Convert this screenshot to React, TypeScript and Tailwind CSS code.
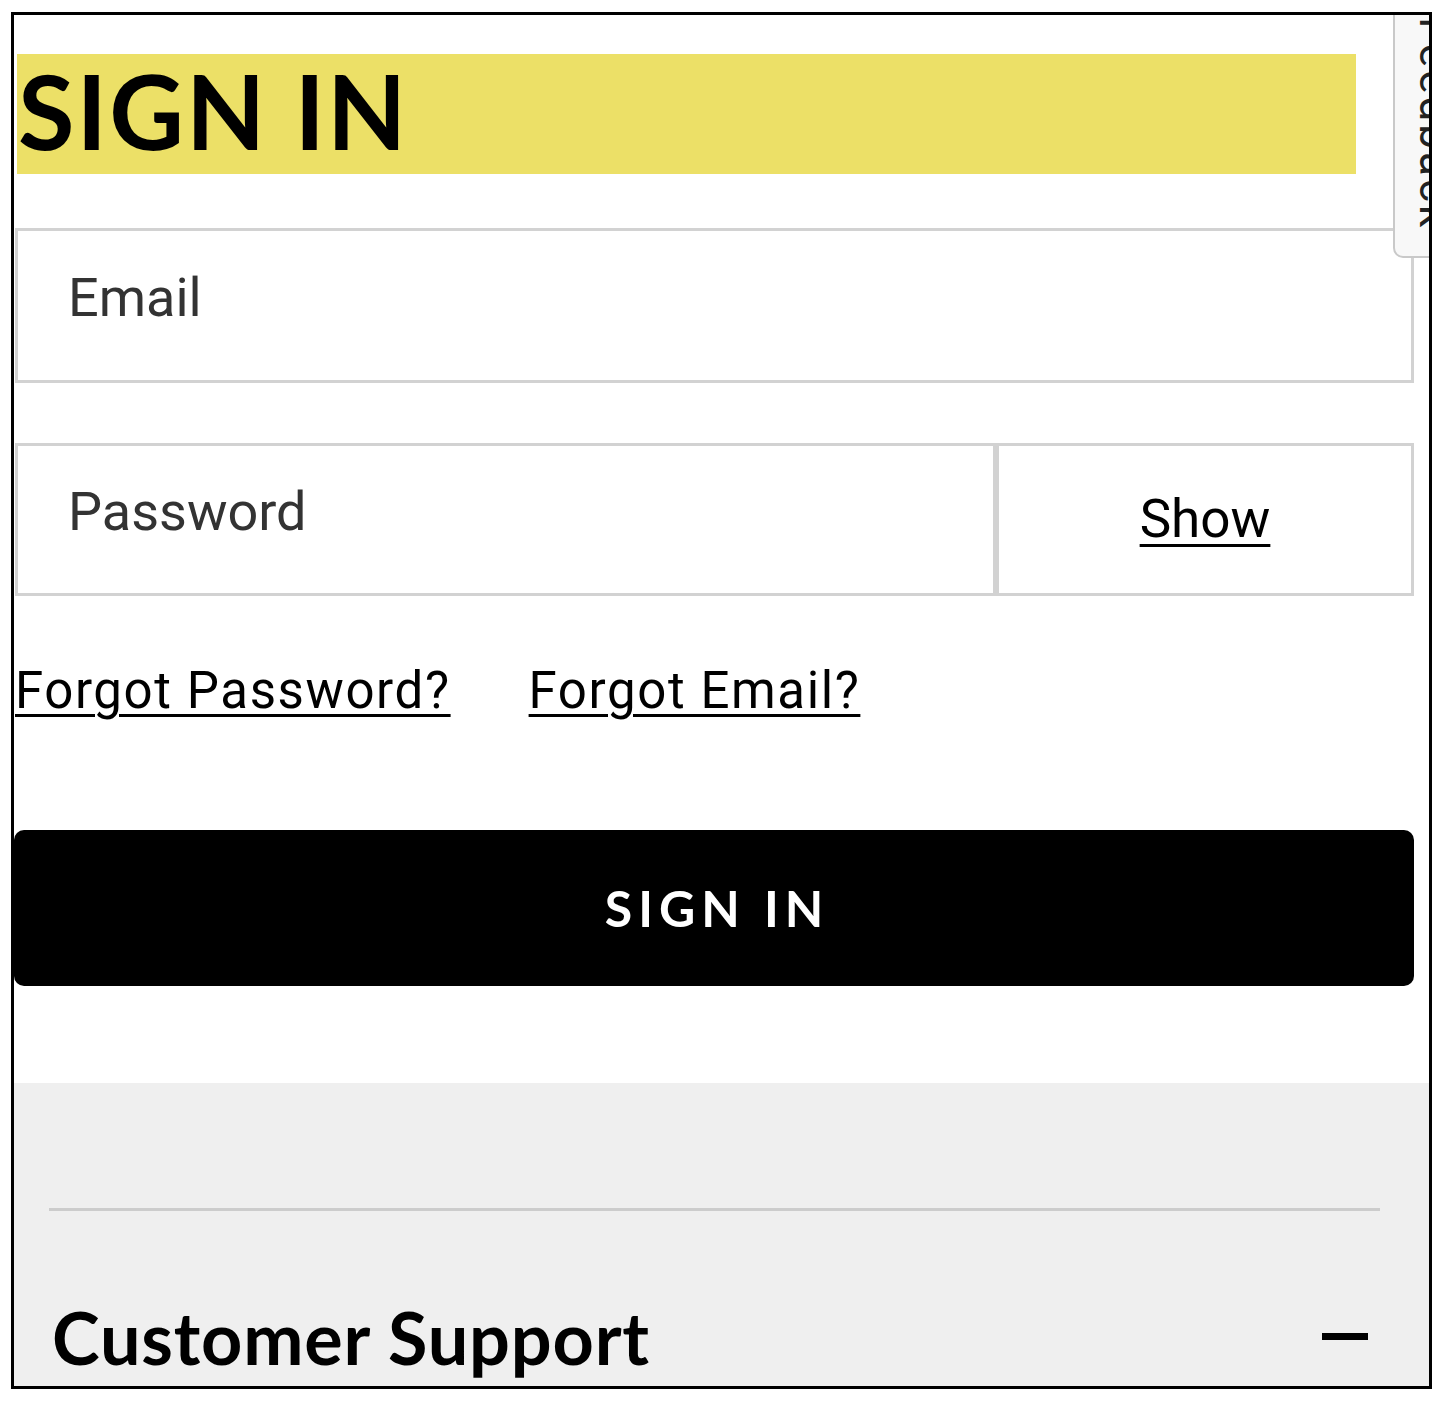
import React from 'react';

const sans = "font-['Lato','Noto_Sans',sans-serif]";
const roboto = "font-['Roboto','Liberation_Sans',sans-serif]";

// side tab that the frame edge cuts through
const FeedbackTab = () => (
  <div className="absolute right-[-46px] top-[-4px] w-[82px] h-[247px] bg-[#f8f8f8] border-2 border-[#c9c9c9] rounded-bl-[10px] pl-[18px] pt-[4px] overflow-hidden">
    <span className={`${roboto} block text-[44px] leading-none text-[#222] [writing-mode:vertical-rl] tracking-[3px]`}>
      Feedback
    </span>
  </div>
);

export default function App() {
  return (
    <div className="w-[1446px] h-[1401px] bg-white pt-[12px] pl-[11px]">
      <div className="relative w-[1421px] h-[1377px] border-[3px] border-black overflow-hidden flex flex-col bg-white">
        <FeedbackTab />

        <div className="mt-[39px] ml-[3px] w-[1339px] h-[120px] bg-[#ece067]">
          <h1 className={`${sans} font-bold text-[103px] leading-[112px] text-black pl-[1px] tracking-[0.02em]`}>
            SIGN IN
          </h1>
        </div>

        <div className="mt-[54px] ml-[1px] w-[1399px] h-[155px] border-[3px] border-[#d2d2d2] pl-[50px] pt-[34px]">
          <span className={`${roboto} text-[54px] leading-[66px] text-[#333]`}>Email</span>
        </div>

        <div className="mt-[60px] ml-[1px] w-[1399px] h-[153px] flex">
          <div className="w-[981px] h-full border-[3px] border-[#d2d2d2] pl-[50px] pt-[33px]">
            <span className={`${roboto} text-[54px] leading-[66px] text-[#333]`}>Password</span>
          </div>
          <div className="flex-1 h-full border-[3px] border-[#d2d2d2] flex items-center justify-center">
            <span className={`${roboto} text-[53px] leading-none text-black underline decoration-[3px] underline-offset-[7px]`}>
              Show
            </span>
          </div>
        </div>

        <div className={`${roboto} mt-[65px] flex gap-[78px] text-[51px] leading-[60px] text-black tracking-[1.6px]`}>
          <a className="underline decoration-[3px] underline-offset-[6px] ml-[1px]">Forgot Password?</a>
          <a className="underline decoration-[3px] underline-offset-[6px]">Forgot Email?</a>
        </div>

        <button className="mt-[109px] w-[1400px] h-[156px] bg-black rounded-[10px] flex items-center justify-center">
          <span className={`${sans} font-bold text-[50px] leading-none text-white tracking-[0.12em] pl-[0.12em]`}>
            SIGN IN
          </span>
        </button>

        <div className="mt-[97px] flex-1 bg-[#efefef] pl-[35px] pr-[49px]">
          <div className="mt-[125px] h-[3px] bg-[#cccccc]" />
          <div className="mt-[90px] flex items-start justify-between">
            <h2 className={`${sans} font-bold text-[72px] leading-[72px] text-black pl-[3px] tracking-[0.8px]`}>
              Customer Support
            </h2>
            <div className="mt-[32px] mr-[12px] w-[46px] h-[7px] bg-black" />
          </div>
        </div>
      </div>
    </div>
  );
}
